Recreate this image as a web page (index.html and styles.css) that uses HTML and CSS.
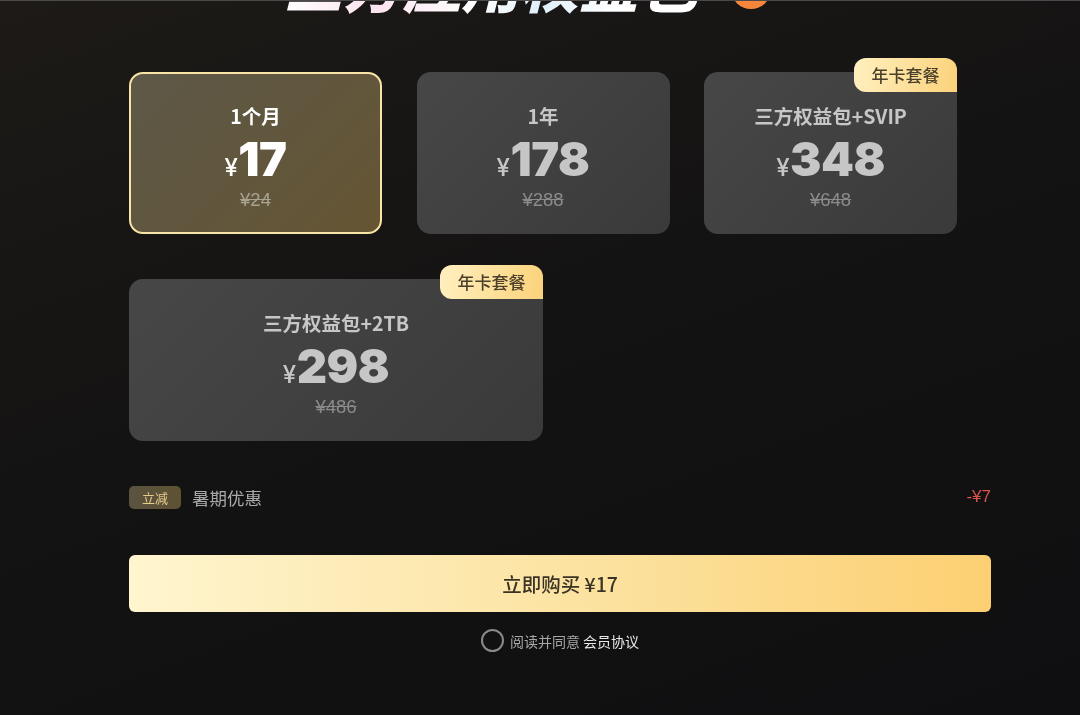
FILE: index.html
```html
<!DOCTYPE html>
<html lang="zh-CN">
<head>
    <meta charset="UTF-8">
    <meta name="viewport" content="width=device-width, initial-scale=1.0">
    <title>三方应用权益包</title>
    <link rel="stylesheet" href="styles.css">
</head>
<body>
<div class="page">
    <div class="title-row">
        <h1 class="title">三方应用权益包</h1>
        <span class="title-dot"></span>
    </div>

    <div class="plans">
        <div class="plan plan-active">
            <div class="plan-name">1个月</div>
            <div class="plan-price"><span class="yen">¥</span>17</div>
            <div class="plan-old">¥24</div>
        </div>
        <div class="plan">
            <div class="plan-name">1年</div>
            <div class="plan-price"><span class="yen">¥</span>178</div>
            <div class="plan-old">¥288</div>
        </div>
        <div class="plan">
            <span class="plan-badge">年卡套餐</span>
            <div class="plan-name">三方权益包+SVIP</div>
            <div class="plan-price"><span class="yen">¥</span>348</div>
            <div class="plan-old">¥648</div>
        </div>
        <div class="plan plan-wide">
            <span class="plan-badge">年卡套餐</span>
            <div class="plan-name">三方权益包+2TB</div>
            <div class="plan-price"><span class="yen">¥</span>298</div>
            <div class="plan-old">¥486</div>
        </div>
    </div>

    <div class="discount">
        <span class="discount-tag">立减</span>
        <span class="discount-name">暑期优惠</span>
        <span class="discount-value">-¥7</span>
    </div>

    <button class="buy-button">立即购买 ¥17</button>

    <div class="agree">
        <span class="agree-check"></span>
        <span class="agree-text">阅读并同意</span>
        <span class="agree-link">会员协议</span>
    </div>
</div>
</body>
</html>
```

FILE: styles.css
```css
* {
    box-sizing: border-box;
}

html, body {
    margin: 0;
    height: 100%;
}

body {
    background: #111112;
    color: #e0e0e0;
    font-family: "Noto Sans CJK SC", "Liberation Sans", sans-serif;
    overflow: hidden;
}

.page {
    height: 715px;
    padding: 0 89px 0 129px;
    border-top: 1px solid #4a4a4a;
    background: linear-gradient(160deg, #1d1a17 0%, #141313 45%, #0f0f11 100%);
    overflow: hidden;
    filter: blur(0.45px);
}

.title-row {
    display: flex;
    align-items: flex-start;
    height: 71px;
    padding-left: 155px;
}

.title {
    margin: -54px 0 0;
    font-size: 59px;
    line-height: 72px;
    font-weight: 900;
    font-style: italic;
    white-space: nowrap;
    background: linear-gradient(90deg, #ffffff 0%, #fbe3ee 22%, #ffffff 45%, #dff0fa 62%, #ffffff 80%);
    -webkit-background-clip: text;
    background-clip: text;
    color: transparent;
}

.title-dot {
    flex: none;
    width: 40px;
    height: 40px;
    margin: -32px 0 0 34px;
    border-radius: 50%;
    background: #f5863c;
}

.plans {
    display: flex;
    flex-wrap: wrap;
    gap: 45px 34.5px;
}

.plan {
    position: relative;
    width: 253px;
    height: 162px;
    padding-top: 32px;
    border-radius: 14px;
    background: linear-gradient(135deg, #474747 0%, #3a3a3a 100%);
    color: #c6c6c6;
    text-align: center;
}

.plan-wide {
    width: 414px;
}

.plan-active {
    background: linear-gradient(135deg, #5d5848 0%, #655533 100%);
    border: 2px solid #f7e4a6;
    padding-top: 30px;
    color: #fff;
}

.plan-name {
    font-size: 19.5px;
    line-height: 24px;
    font-weight: 700;
}

.plan-price {
    margin-top: 6px;
    font-family: Inter, "Liberation Sans", sans-serif;
    font-size: 47px;
    line-height: 50px;
    font-weight: 900;
    letter-spacing: -0.5px;
}

.yen {
    font-size: 24px;
    font-weight: 500;
    margin-right: 1px;
}

.plan-old {
    margin-top: -5px;
    font-family: "Liberation Sans", sans-serif;
    font-size: 18.5px;
    line-height: 24px;
    color: #8b8b8b;
    text-decoration: line-through;
}

.plan-active .plan-old {
    color: #a8a391;
}

.plan-badge {
    position: absolute;
    top: -14px;
    right: 0;
    width: 103px;
    height: 34px;
    border-radius: 12px 12px 0 12px;
    background: linear-gradient(100deg, #fff0c0 0%, #fbd27a 100%);
    color: #4a3f2a;
    font-size: 17px;
    font-weight: 500;
    line-height: 34px;
}

.discount {
    display: flex;
    align-items: center;
    margin-top: 44px;
    height: 24px;
}

.discount-tag {
    width: 52px;
    height: 23px;
    margin-right: 11px;
    border-radius: 5px;
    background: linear-gradient(90deg, #5a5340 0%, #5f5233 100%);
    color: #e6cd8c;
    font-size: 13px;
    line-height: 23px;
    text-align: center;
}

.discount-name {
    font-size: 17.5px;
    color: #a8a8a8;
}

.discount-value {
    margin-left: auto;
    font-size: 17px;
    font-family: "Liberation Sans", sans-serif;
    color: #d9534c;
}

.buy-button {
    display: block;
    width: 862px;
    height: 57px;
    margin-top: 46px;
    border: none;
    border-radius: 6px;
    background: linear-gradient(90deg, #fff5cf 0%, #fbe09a 60%, #fdcf72 100%);
    color: #3a3224;
    font-family: inherit;
    font-size: 19.5px;
    font-weight: 500;
}

.agree {
    display: flex;
    align-items: center;
    justify-content: center;
    margin-top: 17px;
    font-size: 14px;
}

.agree-check {
    width: 23px;
    height: 23px;
    margin-right: 6px;
    border: 2px solid #8a8a8a;
    border-radius: 50%;
}

.agree-text {
    color: #a8a8a8;
}

.agree-link {
    margin-left: 3px;
    color: #e8e8e8;
}
```
